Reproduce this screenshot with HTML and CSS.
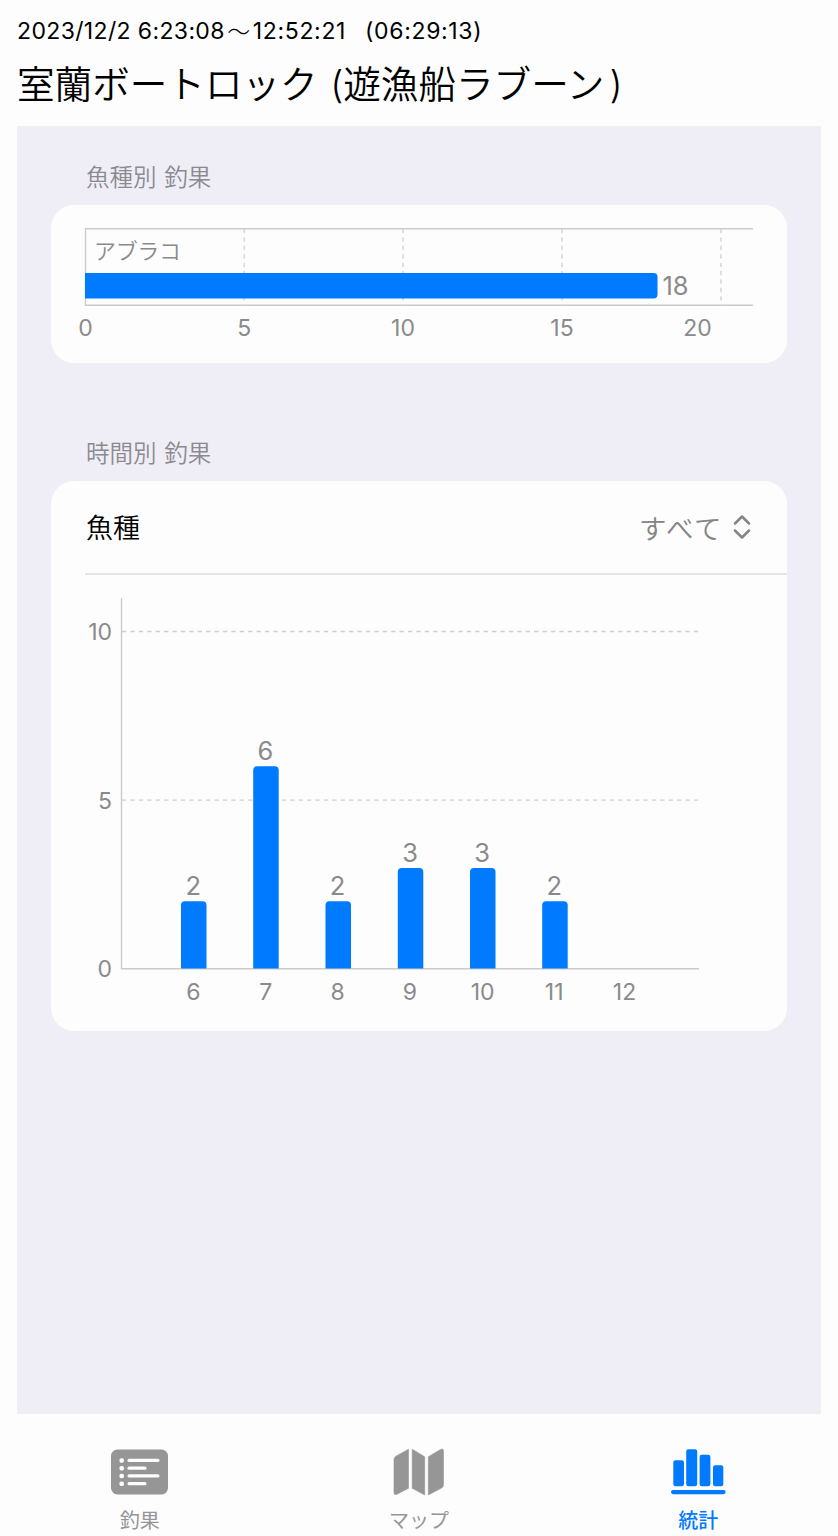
FILE: index.html
```html
<!DOCTYPE html>
<html lang="ja">
<head>
<meta charset="utf-8">
<title>室蘭ボートロック</title>
<link rel="stylesheet" href="styles.css">
</head>
<body>
<div class="app">
  <header class="header">
    <div class="period"><span class="range-start">2023/12/2 6:23:08</span><span class="tilde">～</span><span class="range-end">12:52:21</span><span class="duration">(06:29:13)</span></div>
    <h1 class="title">室蘭ボートロック (遊漁船ラブーン<span class="paren">)</span></h1>
  </header>
  <main class="panel">
    <section class="section">
      <h2 class="section-title">魚種別 釣果</h2>
      <div class="card">
        <svg class="chart" width="736" height="158" viewBox="51 205 736 158">
          <g class="grid">
            <path d="M244.2 229V305M403 229V305M562 229V305M721 229V305"/>
          </g>
          <path class="axis" d="M753 228.8H85.5V305.3H753"/>
          <path class="bar" d="M85 273H653.5a4 4 0 0 1 4 4V294.5a4 4 0 0 1-4 4H85z"/>
          <text class="jp" x="94" y="258.5" textLength="87">アブラコ</text>
          <text class="value" x="662.5" y="295">18</text>
          <g class="tick">
            <text x="85.5" y="336">0</text>
            <text x="244.2" y="336">5</text>
            <text x="403" y="336">10</text>
            <text x="562" y="336">15</text>
            <text x="697.5" y="336">20</text>
          </g>
        </svg>
      </div>
    </section>
    <section class="section">
      <h2 class="section-title">時間別 釣果</h2>
      <div class="card">
        <div class="row">
          <span class="row-label">魚種</span>
          <span class="picker">すべて
            <svg class="chevrons" width="20" height="26" viewBox="0 0 20 26"><path d="M3 9.5 10 2.5l7 7M3 16.5l7 7 7-7"/></svg>
          </span>
        </div>
        <svg class="chart" width="736" height="456" viewBox="51 575 736 456">
          <g class="grid">
            <path d="M122 631.5H698M122 800.2H698"/>
          </g>
          <path class="axis" d="M121.5 598V968.7H699"/>
          <g class="bar">
            <path d="M181 968.5V905.3a4 4 0 0 1 4-4h17.5a4 4 0 0 1 4 4v63.2z"/>
            <path d="M253.2 968.5V770.3a4 4 0 0 1 4-4h17.5a4 4 0 0 1 4 4v198.2z"/>
            <path d="M325.5 968.5V905.3a4 4 0 0 1 4-4h17.5a4 4 0 0 1 4 4v63.2z"/>
            <path d="M397.8 968.5V871.9a4 4 0 0 1 4-4h17.5a4 4 0 0 1 4 4v96.6z"/>
            <path d="M470 968.5V871.9a4 4 0 0 1 4-4h17.5a4 4 0 0 1 4 4v96.6z"/>
            <path d="M542.2 968.5V905.3a4 4 0 0 1 4-4h17.5a4 4 0 0 1 4 4v63.2z"/>
          </g>
          <g class="value mid">
            <text x="193.3" y="895">2</text>
            <text x="265.4" y="760">6</text>
            <text x="337.5" y="895">2</text>
            <text x="410.2" y="862">3</text>
            <text x="482.2" y="862">3</text>
            <text x="554.2" y="895">2</text>
          </g>
          <g class="tick">
            <text x="193.3" y="999.5">6</text>
            <text x="265.8" y="999.5">7</text>
            <text x="337.6" y="999.5">8</text>
            <text x="410" y="999.5">9</text>
            <text x="482.7" y="999.5">10</text>
            <text x="554.2" y="999.5">11</text>
            <text x="624.5" y="999.5">12</text>
          </g>
          <g class="tick end">
            <text x="112" y="640">10</text>
            <text x="112" y="808.5">5</text>
            <text x="112" y="977">0</text>
          </g>
        </svg>
      </div>
    </section>
  </main>
  <nav class="tabs">
    <a class="tab">
      <svg width="60" height="52" viewBox="0.5 0 60 52">
        <rect x="1.5" y="3.5" width="57" height="45" rx="6.5" fill="currentColor"/>
        <g fill="#fdfdfd"><rect x="10" y="12.3" width="4.4" height="4.4" rx="1.6"/><rect x="10" y="20" width="4.4" height="4.4" rx="1.6"/><rect x="10" y="27.8" width="4.4" height="4.4" rx="1.6"/><rect x="10" y="35.5" width="4.4" height="4.4" rx="1.6"/>
        <rect x="18" y="12.8" width="32" height="3.2" rx="1.6"/><rect x="18" y="20.6" width="19" height="3.2" rx="1.6"/><rect x="18" y="28.3" width="32" height="3.2" rx="1.6"/><rect x="18" y="36.1" width="19" height="3.2" rx="1.6"/></g>
      </svg>
      <span>釣果</span>
    </a>
    <a class="tab">
      <svg width="60" height="52" viewBox="0 0 60 52" fill="currentColor" stroke="currentColor" stroke-linejoin="round">
        <path d="M19.5 3.2V42.3L7.5 48.4Q5 49.2 5 46.7V13.5Q5 11.6 6.5 10.4z" stroke-width=".6"/>
        <path d="M23.2 3.2 35.7 10.8V49L23.2 42.3z" stroke-width=".6"/>
        <path d="M39.3 49V10.8L51.5 3.5Q54.5 2 54.5 5V38.7Q54.5 40.7 53 41.8z" stroke-width=".6"/>
      </svg>
      <span>マップ</span>
    </a>
    <a class="tab active">
      <svg width="60" height="52" viewBox="0 0 60 52" fill="currentColor">
        <rect x="5.3" y="14.3" width="10.7" height="26" rx="2.2"/><rect x="18.2" y="3.2" width="11" height="37.1" rx="2.2"/><rect x="31.6" y="8.8" width="10.8" height="31.5" rx="2.2"/><rect x="45" y="19.3" width="10.3" height="21" rx="2.2"/><rect x="3" y="44" width="54.6" height="4.2" rx="2.1"/>
      </svg>
      <span>統計</span>
    </a>
  </nav>
</div>
</body>
</html>
```
FILE: styles.css
```css
* { box-sizing: border-box; }
body {
  margin: 0;
  background: #fdfdfd;
  color: #000;
  font-family: Inter, "Noto Sans CJK JP", sans-serif;
}
.app {
  width: 838px;
  height: 1536px;
  display: flex;
  flex-direction: column;
  overflow: hidden;
}
.header {
  height: 126px;
  padding: 16px 17px 0;
  white-space: nowrap;
}
.period {
  display: flex;
  height: 30px;
  line-height: 30px;
  font-size: 23px;
  letter-spacing: .36px;
}
.range-end, .duration { letter-spacing: .65px; }
.tilde { width: 28px; text-align: center; font-family: "Noto Sans CJK JP", sans-serif; font-weight: 300; line-height: 28px; }
.duration { margin-left: 19px; }
.title {
  margin: 11px 0 0;
  height: 56px;
  line-height: 56px;
  font-size: 37.6px;
  font-weight: 350;
  word-spacing: 2px;
}
.paren { margin-left: 5px; }
.panel {
  height: 1288px;
  margin: 0 17px;
  padding: 0 34px;
  background: #efeef6;
}
.section-title {
  margin: 0;
  height: 79px;
  padding: 33px 0 0 35px;
  line-height: 34px;
  font-size: 23.5px;
  font-weight: 350;
  word-spacing: 2.5px;
  font-family: "Noto Sans CJK JP", sans-serif;
  color: #8b8a90;
}
.section + .section .section-title { height: 118px; padding-top: 72px; }
.card {
  width: 736px;
  background: #fdfdfd;
  border-radius: 23px;
  overflow: hidden;
}
.chart { display: block; }
.row {
  display: flex;
  align-items: center;
  justify-content: space-between;
  height: 94px;
  margin-left: 34px;
  padding: 0 35px 3px 1px;
  box-shadow: inset 0 -2px #e4e4e6;
  font-family: "Noto Sans CJK JP", sans-serif;
  font-size: 27px;
  font-weight: 350;
}
.picker { display: flex; align-items: center; gap: 9px; color: #858585; font-size: 27.5px; letter-spacing: 1.5px; }
.chevrons { fill: none; stroke: #858585; stroke-width: 2.5; stroke-linecap: round; stroke-linejoin: round; }
.grid { fill: none; stroke: #cfcfcf; stroke-width: 1.3; stroke-dasharray: 4.3 4.11; }
.axis { fill: none; stroke: #cbcbcc; stroke-width: 1.4; }
.bar { fill: #007aff; }
.chart text { fill: #8a8a8a; }
.jp { font: 350 22px "Noto Sans CJK JP", sans-serif; }
.value { font-size: 25.5px; }
.mid, .tick { text-anchor: middle; }
.tick { font-size: 23px; }
.tick.end { text-anchor: end; }
.tabs {
  display: grid;
  grid-template-columns: repeat(3, 279.33px);
  height: 122px;
  padding-top: 32px;
}
.tab {
  display: flex;
  flex-direction: column;
  align-items: center;
  color: #969696;
  font-family: "Noto Sans CJK JP", sans-serif;
  font-size: 20px;
  line-height: 30px;
}
.tab span { margin-top: 7px; }
.active { color: #007aff; font-weight: 500; }
```
